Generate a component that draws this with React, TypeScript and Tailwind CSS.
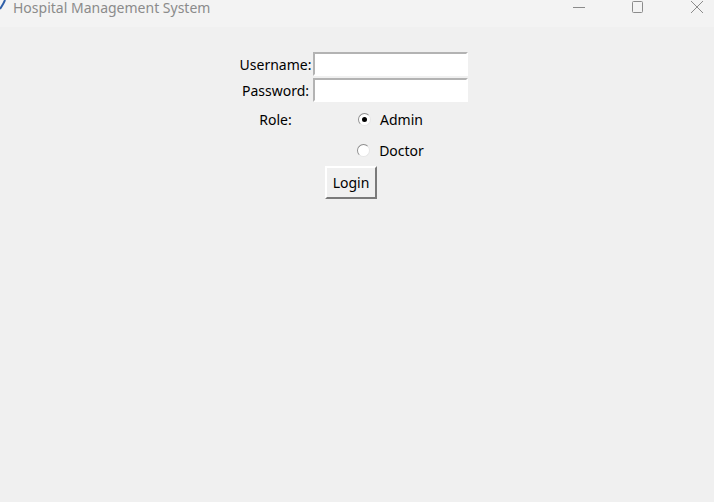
import React, { useState } from 'react'

function Radio({ checked, label, onClick }: { checked: boolean; label: string; onClick: () => void }): React.JSX.Element {
    return (
        <button type="button" onClick={onClick} className="flex items-center gap-[9px] text-[14px] text-black">
            <span className="flex items-center justify-center w-[13px] h-[13px] rounded-full border border-[#8e8e8e] border-b-[#e6e6e6] border-r-[#e6e6e6] bg-white">
                {checked && <span className="w-[5px] h-[5px] rounded-full bg-black" />}
            </span>
            <span className="pt-[2px]">{label}</span>
        </button>
    )
}

export default function App(): React.JSX.Element {
    const [role, setRole] = useState('Admin')

    return (
        <div className="w-[714px] h-[502px] bg-[#f0f0f0] overflow-hidden" style={{ fontFamily: '"Segoe UI", "Noto Sans", "Open Sans", sans-serif' }}>
            {/* title bar */}
            <div className="h-[27px] bg-[#f3f3f3] flex items-start">
                <svg width="8" height="12" viewBox="0 0 8 12">
                    <path d="M5 0 C4 3 2 6 0 9" stroke="#2f5fa8" strokeWidth="2" fill="none" />
                </svg>
                <span className="ml-[5px] text-[14px] leading-[16px] text-[#8b8b8b]">Hospital Management System</span>
                <div className="ml-auto pr-[11px] flex items-start gap-[47px]">
                    <svg width="12" height="14" viewBox="0 0 12 14"><path d="M0 7.5 H12" stroke="#8b8b8b" strokeWidth="1" /></svg>
                    <svg width="12" height="14" viewBox="0 0 12 14"><rect x="0.5" y="1.5" width="10" height="11" rx="1" stroke="#8b8b8b" strokeWidth="1" fill="none" /></svg>
                    <svg width="12" height="14" viewBox="0 0 12 14"><path d="M0 1 L12 13 M12 1 L0 13" stroke="#8b8b8b" strokeWidth="1" /></svg>
                </div>
            </div>

            {/* login form */}
            <div className="ml-[238px] mt-[24px] grid grid-cols-[75px_155px] grid-rows-[26px_26px_32px_30px_35px] text-[14px] text-black leading-none">
                <div className="flex items-center justify-center pt-[2px]">Username:</div>
                <div className="flex items-center">
                    <input className="w-[155px] h-[24px] bg-white border-2 border-t-[#b3b3b3] border-l-[#b3b3b3] border-b-white border-r-white outline-none px-1 text-[14px]" />
                </div>
                <div className="flex items-center justify-center pt-[2px]">Password:</div>
                <div className="flex items-center">
                    <input type="password" className="w-[155px] h-[24px] bg-white border-2 border-t-[#b3b3b3] border-l-[#b3b3b3] border-b-white border-r-white outline-none px-1 text-[14px]" />
                </div>
                <div className="flex items-center justify-center pt-[2px]">Role:</div>
                <div className="flex items-center justify-center">
                    <Radio checked={role === 'Admin'} label="Admin" onClick={() => setRole('Admin')} />
                </div>
                <div />
                <div className="flex items-center justify-center">
                    <Radio checked={role === 'Doctor'} label="Doctor" onClick={() => setRole('Doctor')} />
                </div>
                <div className="col-span-2 flex items-center justify-center pr-[4px]">
                    <button className="w-[52px] h-[33px] bg-[#f0f0f0] border-2 border-t-white border-l-white border-b-[#7a7a7a] border-r-[#7a7a7a] text-[14px]">Login</button>
                </div>
            </div>
        </div>
    )
}
